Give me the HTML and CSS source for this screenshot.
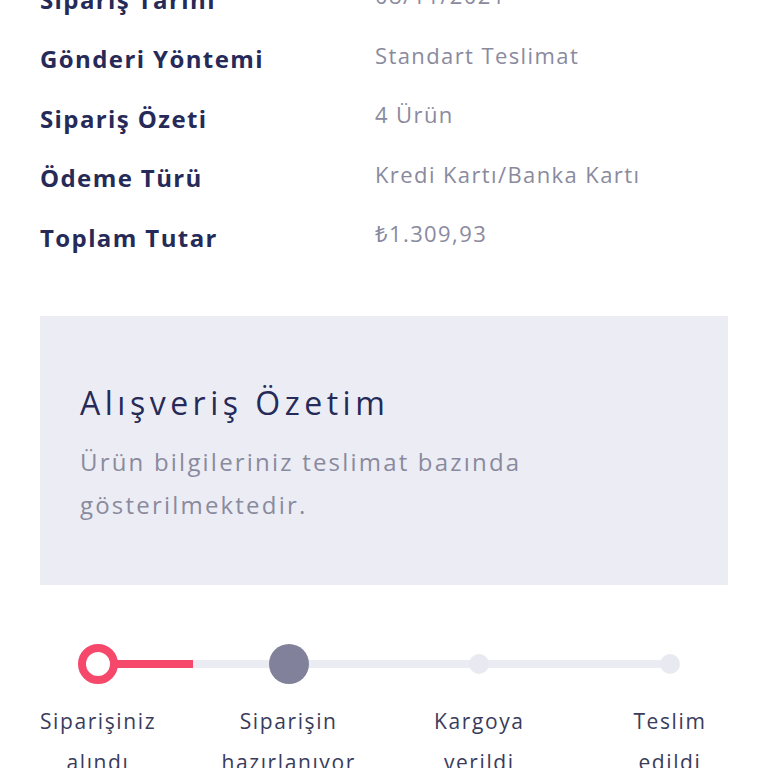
FILE: index.html
```html
<!DOCTYPE html>
<html lang="tr">
<head>
<meta charset="utf-8">
<link rel="stylesheet" href="styles.css">
</head>
<body>
<main class="page">
  <dl class="details">
    <div class="row"><dt>Sipariş Tarihi</dt><dd>08/11/2021</dd></div>
    <div class="row"><dt>Gönderi Yöntemi</dt><dd>Standart Teslimat</dd></div>
    <div class="row"><dt>Sipariş Özeti</dt><dd>4 Ürün</dd></div>
    <div class="row"><dt>Ödeme Türü</dt><dd>Kredi Kartı/Banka Kartı</dd></div>
    <div class="row"><dt>Toplam Tutar</dt><dd>₺1.309,93</dd></div>
  </dl>

  <section class="summary">
    <h2 class="summary-title">Alışveriş Özetim</h2>
    <p class="summary-text">Ürün bilgileriniz teslimat bazında gösterilmektedir.</p>
  </section>

  <ol class="steps">
    <li class="step step-done"><span class="node"></span><span class="label">Siparişiniz alındı</span></li>
    <li class="step step-current"><span class="node"></span><span class="label">Siparişin hazırlanıyor</span></li>
    <li class="step"><span class="node"></span><span class="label">Kargoya verildi</span></li>
    <li class="step"><span class="node"></span><span class="label">Teslim edildi</span></li>
  </ol>
</main>
</body>
</html>
```
FILE: styles.css
```css
* { box-sizing: border-box; }
html, body { margin: 0; padding: 0; background: #fff; }
body {
  font-family: "Open Sans", "Noto Sans", sans-serif;
  color: #262a58;
  width: 768px;
  height: 768px;
  overflow: hidden;
}
.page {
  padding: 0 40px;
}
.details {
  margin: -30px 0 0 0;
  padding: 0;
}
.row {
  display: grid;
  grid-template-columns: 335px 1fr;
  height: 59.5px;
  align-items: center;
}
.row dt {
  font-size: 24px;
  font-weight: 700;
  color: #262a58;
  line-height: 30px;
  letter-spacing: 1.4px;
}
.row dd {
  margin: -9px 0 0 0;
  font-size: 22px;
  font-weight: 400;
  color: #8a8a9e;
  line-height: 30px;
  letter-spacing: 1.4px;
}
.summary {
  margin-top: 48.5px;
  background: #ecedf4;
  height: 269px;
  padding: 65px 40px 0 40px;
}
.summary-title {
  margin: 0;
  font-size: 32px;
  font-weight: 400;
  line-height: 44px;
  color: #262a58;
  letter-spacing: 4.5px;
}
.summary-text {
  margin: 15px 0 0 0;
  font-size: 24px;
  line-height: 43px;
  color: #8a8a9e;
  max-width: 480px;
  letter-spacing: 2.2px;
}
.steps {
  list-style: none;
  margin: 59px 0 0 0;
  padding: 0;
  display: grid;
  grid-template-columns: repeat(4, 116px);
  justify-content: space-between;
  position: relative;
}
.steps::before {
  content: "";
  position: absolute;
  left: 58px;
  right: 58px;
  top: 16px;
  height: 8px;
  background: #ebecf3;
}
.steps::after {
  content: "";
  position: absolute;
  left: 58px;
  width: 95px;
  top: 16px;
  height: 8px;
  background: #f5486b;
}
.step {
  display: flex;
  flex-direction: column;
  align-items: center;
  position: relative;
  z-index: 1;
}
.node {
  width: 20px;
  height: 20px;
  margin: 10px 0;
  border-radius: 50%;
  background: #e9eaf1;
}
.step-done .node {
  width: 40px;
  height: 40px;
  margin: 0;
  background: #fff;
  border: 8px solid #f5486b;
}
.step-current .node {
  width: 40px;
  height: 40px;
  margin: 0;
  background: #81819b;
}
.label {
  margin-top: 16.5px;
  font-size: 21px;
  line-height: 41px;
  color: #3a3c5c;
  text-align: center;
  width: 140px;
  flex-shrink: 0;
  letter-spacing: 1.6px;
}
```
